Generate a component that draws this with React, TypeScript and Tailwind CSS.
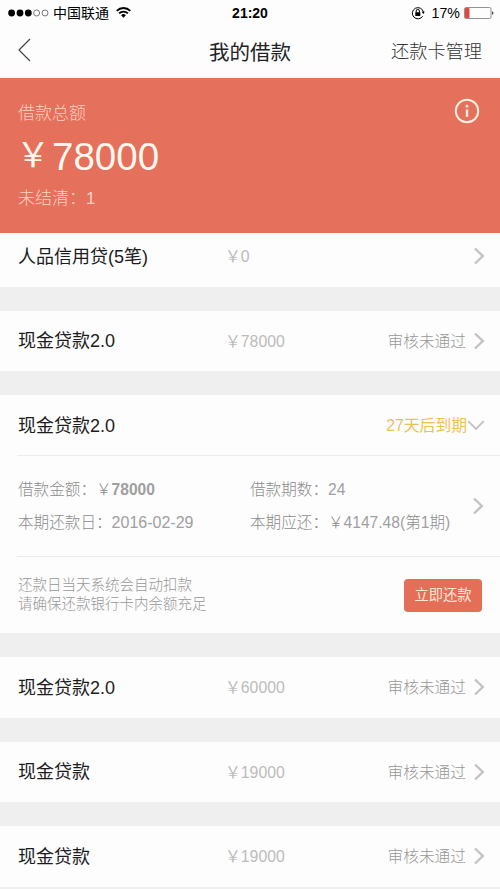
type Loan = {
  name: string;
  amount: string;
  status?: string;
};

const topLoans: Loan[] = [{ name: "现金贷款2.0", amount: "78000", status: "审核未通过" }];

const moreLoans: Loan[] = [
  { name: "现金贷款2.0", amount: "60000", status: "审核未通过" },
  { name: "现金贷款", amount: "19000", status: "审核未通过" },
  { name: "现金贷款", amount: "19000", status: "审核未通过" },
];

function ChevronRight() {
  return (
    <svg className="h-[18px] w-3 shrink-0" viewBox="0 0 12 18" fill="none" stroke="#c3c3c6" strokeWidth="2.4">
      <path d="M2 1.5 9.8 9 2 16.5" />
    </svg>
  );
}

function StatusBar() {
  return (
    <div className="relative flex h-[25px] items-center justify-between pl-2 pr-[6px] text-black">
      <div className="flex items-center">
        <svg className="h-2 w-[41px]" viewBox="0 0 41 8">
          <circle cx="3.6" cy="4" r="3.4" />
          <circle cx="12" cy="4" r="3.4" />
          <circle cx="20.3" cy="4" r="3.4" />
          <g fill="none" stroke="#444" strokeWidth="0.7">
            <circle cx="28.6" cy="4" r="3" />
            <circle cx="37" cy="4" r="3" />
          </g>
        </svg>
        <span className="ml-1 text-[14px] leading-5">中国联通</span>
        <svg className="ml-[7px] h-[11px] w-[15px]" viewBox="0 0 15 11" fill="none" stroke="#000" strokeWidth="1.8">
          <path d="M.7 3.8a9.7 9.7 0 0 1 13.6 0" />
          <path d="M3.1 6.4a6.2 6.2 0 0 1 8.8 0" />
          <path d="M7.5 10.8 5.1 8.3a3.4 3.4 0 0 1 4.8 0Z" fill="#000" stroke="none" />
        </svg>
      </div>
      <span className="absolute left-1/2 -translate-x-1/2 text-[14px] font-bold leading-5">21:20</span>
      <div className="flex items-center">
        <svg className="h-[14px] w-[14px]" viewBox="0 0 14 14" fill="none" stroke="#000" strokeWidth="1">
          <path d="M11.7 10.2A5.6 5.6 0 1 1 12.4 6" />
          <path d="m10.6 5.8 3.2 0-1.5 2.3Z" fill="#000" stroke="none" />
          <rect x="4.3" y="6.2" width="5" height="3.8" fill="#000" stroke="none" />
          <path d="M5.2 6.4V5a1.6 1.6 0 0 1 3.2 0v1.4" />
        </svg>
        <span className="ml-[7px] text-[14.2px] leading-5">17%</span>
        <svg className="ml-1 h-3 w-[30px]" viewBox="0 0 30 12">
          <rect x=".5" y=".5" width="26.5" height="11" rx="1.5" fill="none" stroke="#777" strokeWidth=".8" />
          <rect x="1" y="1" width="4.5" height="10" rx=".8" fill="#e0483f" />
          <path d="M28.2 4.2c1.6.4 1.6 3.2 0 3.6Z" fill="#222" />
        </svg>
      </div>
    </div>
  );
}

function NavBar() {
  return (
    <div className="relative flex h-[53px] items-center justify-between px-[18px]">
      <svg className="-mt-1 h-6 w-[13px]" viewBox="0 0 13 24" fill="none" stroke="#444" strokeWidth="1.2">
        <path d="M12 1 1 12l11 11" />
      </svg>
      <h1 className="absolute left-1/2 -translate-x-1/2 whitespace-nowrap pt-[2px] text-[20.5px] leading-7 text-[#222]">我的借款</h1>
      <a className="pt-px text-[18.2px] font-light leading-7 text-[#333]">还款卡管理</a>
    </div>
  );
}

function Summary() {
  return (
    <section className="flex h-[155px] justify-between bg-[#e5705b] pl-[18px] pr-5">
      <div className="pt-6">
        <p className="text-[17px] font-light leading-6 text-[#fcd0c1]">借款总额</p>
        <p className="mt-[7px] flex h-[48px] items-center leading-[48px] text-[#fff8ee]">
          <span className="-ml-[2px] w-9 -translate-y-[2px] text-[34px]">￥</span>
          <span className="text-[38.5px]">78000</span>
        </p>
        <p className="mt-[6px] text-[17px] font-light leading-6 text-[#fcd0c1]">未结清：1</p>
      </div>
      <svg className="mt-5 h-[26px] w-[26px]" viewBox="0 0 26 26" fill="none" stroke="#fff0e2" strokeWidth="2">
        <circle cx="13" cy="13" r="11.2" />
        <path d="M13 11.5v7.3" strokeWidth="2.4" />
        <circle cx="13" cy="8.2" r="1.4" fill="#fff0e2" stroke="none" />
      </svg>
    </section>
  );
}

function LoanRow({ name, amount, status }: Loan) {
  return (
    <div className="flex h-[60.5px] shrink-0 items-center bg-[#fdfdfd] pl-[18px] pr-[15px]">
      <span className="w-[207px] pt-[2px] text-[18px] text-[#1c1c1c]">{name}</span>
      <span className="pt-[2px] text-[15.8px] text-[#bcbcbc]">￥{amount}</span>
      <span className="ml-auto mr-[7px] pt-[2px] text-[15.7px] font-light text-[#989898]">{status}</span>
      <ChevronRight />
    </div>
  );
}

function ActiveLoan() {
  return (
    <section className="h-[238px] bg-[#fdfdfd]">
      <div className="ml-[17px] flex h-[61px] items-center border-b border-[#ececec] pr-[15px]">
        <span className="pl-px pt-[2px] text-[18px] text-[#1c1c1c]">现金贷款2.0</span>
        <span className="ml-auto pt-[2px] text-[15.8px] text-[#efbf54]">27天后到期</span>
        <svg className="h-[11px] w-[18px]" viewBox="0 0 18 11" fill="none" stroke="#c3c3c6" strokeWidth="1.9">
          <path d="m1.2 1.2 7.8 7.8 7.8-7.8" />
        </svg>
      </div>
      <div className="ml-[17px] flex h-[101px] items-center border-b border-[#ececec] pl-px pr-4 text-[15.6px] font-light leading-[33px] text-[#8c8c8c]">
        <div className="w-[232px]">
          <p>
            借款金额：￥<b className="font-bold text-[#9f9f9f]">78000</b>
          </p>
          <p>
            本期还款日：<span className="text-[16px] text-[#a0a0a0]">2016-02-29</span>
          </p>
        </div>
        <div className="whitespace-nowrap">
          <p>
            借款期数：<span className="text-[#a0a0a0]">24</span>
          </p>
          <p>
            本期应还：￥<span className="text-[#a0a0a0]">4147.48(</span>第<span className="text-[#a0a0a0]">1</span>期
            <span className="text-[#a0a0a0]">)</span>
          </p>
        </div>
        <div className="ml-auto">
          <ChevronRight />
        </div>
      </div>
      <div className="flex h-[76px] items-center justify-between px-[18px]">
        <p className="text-[14.5px] font-light leading-[19.5px] text-[#989898]">
          还款日当天系统会自动扣款
          <br />
          请确保还款银行卡内余额充足
        </p>
        <button className="h-[33px] w-[78px] rounded-[4px] bg-[#e56e59] pt-[2px] text-[14.3px] text-[#ffe6d6]">立即还款</button>
      </div>
    </section>
  );
}

export default function App() {
  return (
    <div className="h-[889px] w-[500px] overflow-hidden bg-[#efefef] font-['Liberation_Sans','Noto_Sans_CJK_SC',sans-serif]">
      <header className="bg-[#fdfdfd]">
        <StatusBar />
        <NavBar />
      </header>
      <Summary />
      <main className="flex flex-col gap-6">
        {/* First row is scrolled partly under the summary */}
        <div className="flex h-[53.5px] flex-col justify-end overflow-hidden">
          <LoanRow name="人品信用贷(5笔)" amount="0" />
        </div>
        {topLoans.map((loan, i) => (
          <LoanRow key={i} {...loan} />
        ))}
        <ActiveLoan />
        {moreLoans.map((loan, i) => (
          <LoanRow key={i} {...loan} />
        ))}
      </main>
    </div>
  );
}
